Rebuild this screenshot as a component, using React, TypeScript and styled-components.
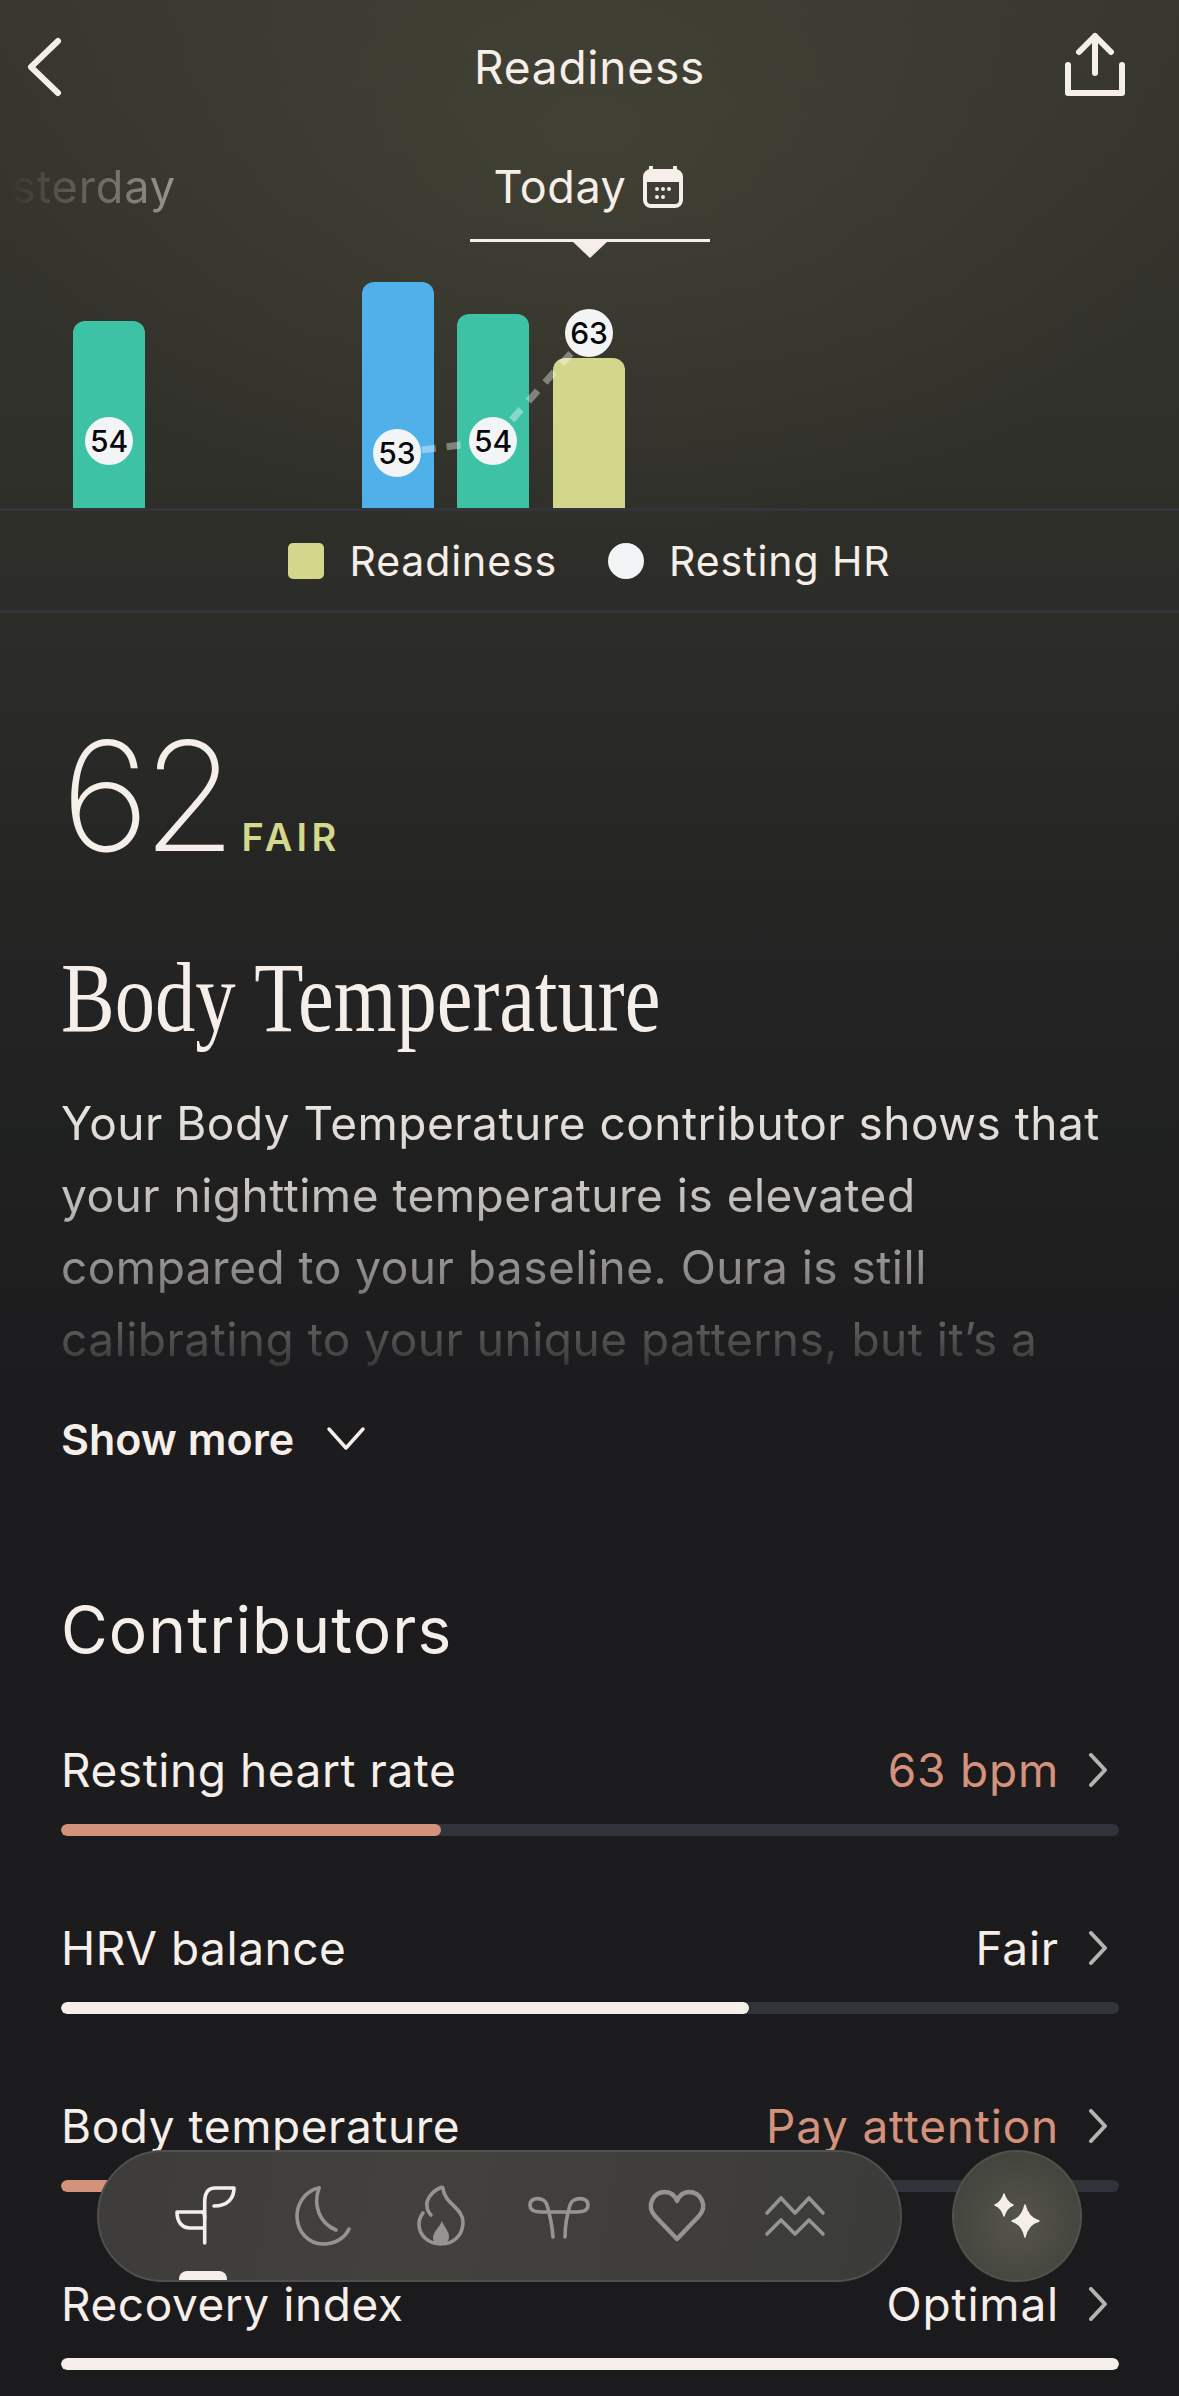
import React from "react";
import styled, { createGlobalStyle } from "styled-components";

const CREAM = "#f6eee8";
const SANS = `"Inter", "Liberation Sans", sans-serif`;

const GlobalStyle = createGlobalStyle`
  html, body {
    margin: 0;
    padding: 0;
    background: #1b1b1d;
  }
  * {
    box-sizing: border-box;
  }
`;

const Page = styled.div`
  position: relative;
  width: 1179px;
  height: 2396px;
  overflow: hidden;
  color: ${CREAM};
  font-family: ${SANS};
  background:
    radial-gradient(ellipse 620px 420px at 590px 130px, rgba(78, 76, 60, 0.5), rgba(78, 76, 60, 0) 100%),
    linear-gradient(180deg, #37372f 0px, #31312b 400px, #2a2b27 700px, #222322 1000px, #1c1c1e 1380px, #1b1b1d 100%);
`;

const Header = styled.header`
  display: grid;
  grid-template-columns: 1fr auto 1fr;
  align-items: center;
  height: 134px;
`;

const HeaderTitle = styled.h1`
  margin: 0;
  font-size: 46px;
  font-weight: 400;
  letter-spacing: 0.8px;
`;

const HeaderIcon = styled.svg<{ $end?: boolean }>`
  display: block;
  justify-self: ${({ $end }) => ($end ? "end" : "start")};
  margin-right: ${({ $end }) => ($end ? "40px" : "0")};
  fill: none;
  stroke: ${CREAM};
  stroke-width: 6;
  stroke-linecap: round;
  stroke-linejoin: round;
`;

const DateStrip = styled.div`
  display: grid;
  grid-template-columns: 470px 240px;
  height: 108px;
`;

const Yesterday = styled.div`
  display: flex;
  justify-content: flex-end;
  align-items: center;
  width: 176px;
  height: 105px;
  overflow: hidden;
  font-size: 45px;
  letter-spacing: 0.9px;
  white-space: nowrap;
  color: #b9b6ae;
  mask-image: linear-gradient(90deg, transparent 6px, rgba(0, 0, 0, 0.75) 176px);
`;

const TodayTab = styled.div`
  position: relative;
  display: flex;
  justify-content: center;
  align-items: center;
  gap: 16px;
  height: 108px;
  padding-right: 2px;
  border-bottom: 3px solid ${CREAM};
  font-size: 45px;
  letter-spacing: 0.6px;

  &::after {
    content: "";
    position: absolute;
    left: 102px;
    bottom: -19px;
    border-left: 18px solid transparent;
    border-right: 18px solid transparent;
    border-top: 17px solid ${CREAM};
  }
`;

const Chart = styled.div`
  position: relative;
  display: flex;
  align-items: flex-end;
  height: 266px;
  padding-left: 73px;
`;

const Bar = styled.div<{ $height: number; $color: string; $gap: number }>`
  width: 72px;
  height: ${({ $height }) => $height}px;
  margin-right: ${({ $gap }) => $gap}px;
  background: ${({ $color }) => $color};
  border-radius: 12px 12px 0 0;
`;

const TrendLine = styled.svg`
  position: absolute;
  left: 0;
  top: 0;
  fill: none;
  stroke: rgba(255, 255, 255, 0.38);
  stroke-width: 7;
  stroke-dasharray: 14 11;
`;

const Badge = styled.div<{ $x: number; $y: number }>`
  position: absolute;
  left: ${({ $x }) => $x - 24}px;
  top: ${({ $y }) => $y - 24}px;
  display: flex;
  align-items: center;
  justify-content: center;
  width: 48px;
  height: 48px;
  border-radius: 50%;
  background: #f3f4f6;
  color: #08080a;
  font-size: 30px;
  font-weight: 500;
`;

const Legend = styled.div`
  display: flex;
  justify-content: center;
  align-items: center;
  height: 105px;
  border-top: 3px solid #32353c;
  border-bottom: 3px solid #32353c;
`;

const LegendSwatch = styled.span<{ $round?: boolean; $color: string }>`
  width: 36px;
  height: 36px;
  margin-right: 25px;
  border-radius: ${({ $round }) => ($round ? "50%" : "5px")};
  background: ${({ $color }) => $color};
`;

const LegendLabel = styled.span`
  margin-right: 51px;
  font-size: 41px;
  letter-spacing: 0.9px;

  &:last-child {
    margin-right: 0;
  }
`;

const Content = styled.main`
  padding: 0 60px 0 61px;
`;

const Score = styled.div`
  display: flex;
  align-items: baseline;
  gap: 12px;
  height: 329px;
  padding-top: 89px;
  line-height: 188px;
`;

const ScoreValue = styled.span`
  font-size: 152px;
  font-weight: 200;
  letter-spacing: -7px;
`;

const ScoreLabel = styled.span`
  font-size: 38px;
  font-weight: 600;
  letter-spacing: 4.3px;
  color: #d3d88c;
`;

const Title = styled.h2`
  margin: 0;
  height: 112px;
  font-family: "Liberation Serif", serif;
  font-size: 100px;
  font-weight: 400;
  line-height: 112px;
  white-space: nowrap;
  transform: scaleX(0.806);
  transform-origin: left center;
`;

const Summary = styled.div`
  margin-top: 33px;
  font-size: 46px;
  line-height: 72px;
  letter-spacing: 0.5px;
  white-space: nowrap;
  color: #f1ebe6;
  mask-image: linear-gradient(180deg, #000 0px, rgba(0, 0, 0, 0.85) 90px, rgba(0, 0, 0, 0.55) 180px, rgba(0, 0, 0, 0.1) 288px);
`;

const SummaryLine = styled.div``;

const ShowMore = styled.button`
  display: flex;
  align-items: center;
  gap: 32px;
  height: 60px;
  margin-top: 34px;
  padding: 0;
  border: 0;
  background: none;
  color: ${CREAM};
  font-family: ${SANS};
  font-size: 43px;
  font-weight: 600;
`;

const ShowMoreIcon = styled.svg`
  fill: none;
  stroke: ${CREAM};
  stroke-width: 3.5;
  stroke-linecap: round;
  stroke-linejoin: round;
`;

const SectionTitle = styled.h3`
  margin: 121px 0 0;
  height: 80px;
  font-size: 64px;
  font-weight: 400;
  line-height: 80px;
  letter-spacing: 1.1px;
`;

const Contributors = styled.section`
  margin-top: 70px;
`;

const Row = styled.div`
  height: 178px;
`;

const RowHead = styled.div`
  display: flex;
  align-items: center;
  height: 60px;
  margin-bottom: 24px;
  font-size: 46px;
`;

const RowLabel = styled.span`
  flex: 1;
  letter-spacing: 0.55px;
`;

const RowValue = styled.span<{ $alert?: boolean }>`
  color: ${({ $alert }) => ($alert ? "#d4917b" : CREAM)};
  letter-spacing: 0.8px;
`;

const RowChevron = styled.svg`
  margin: 0 11px 0 29px;
  fill: none;
  stroke: #b5b3b0;
  stroke-width: 4;
  stroke-linecap: round;
  stroke-linejoin: round;
`;

const Track = styled.div`
  height: 12px;
  border-radius: 6px;
  background: #30333a;
  overflow: hidden;
`;

const Fill = styled.div<{ $alert?: boolean; $percent: number }>`
  height: 100%;
  width: ${({ $percent }) => $percent}%;
  border-radius: 6px;
  background: ${({ $alert }) => ($alert ? "#d4917b" : CREAM)};
`;

const Nav = styled.nav`
  position: absolute;
  left: 97px;
  top: 2150px;
  display: flex;
  align-items: center;
  width: 805px;
  height: 132px;
  padding-left: 47px;
  border: 2px solid #4f4f4d;
  border-radius: 66px;
  overflow: hidden;
  background: linear-gradient(100deg, #3d3c3b, #43413e 40%, #3b3b3a);
`;

const NavIcon = styled.svg<{ $active?: boolean; $heavy?: boolean }>`
  flex: none;
  margin: 0 27px;
  fill: none;
  stroke: ${({ $active }) => ($active ? CREAM : "#969492")};
  stroke-width: ${({ $heavy }) => ($heavy ? 4.4 : 3.6)};
  stroke-linecap: round;
  stroke-linejoin: round;
`;

const NavMarker = styled.div`
  position: absolute;
  left: 80px;
  bottom: 0;
  width: 48px;
  height: 9px;
  border-radius: 8px 8px 0 0;
  background: ${CREAM};
`;

const AssistantButton = styled.div`
  position: absolute;
  left: 952px;
  top: 2150px;
  display: flex;
  align-items: center;
  justify-content: center;
  width: 130px;
  height: 132px;
  border: 2px solid #51524a;
  border-radius: 50%;
  background: radial-gradient(circle at 50% 55%, #55554a, #3d3e39 100%);
`;

const rows = [
  { label: "Resting heart rate", value: "63 bpm", percent: 35.9, alert: true },
  { label: "HRV balance", value: "Fair", percent: 65, alert: false },
  { label: "Body temperature", value: "Pay attention", percent: 12, alert: true },
  { label: "Recovery index", value: "Optimal", percent: 100, alert: false },
];

const Chevron = () => (
  <RowChevron width="20" height="34" viewBox="0 0 20 34">
    <path d="M3 2 L17 17 L3 32" />
  </RowChevron>
);

const App = () => {
  return (
    <Page>
      <GlobalStyle />
      <Header>
        <HeaderIcon width="70" height="70" viewBox="0 32 70 70">
          <path d="M58 41 L31 67 L58 93" />
        </HeaderIcon>
        <HeaderTitle>Readiness</HeaderTitle>
        <HeaderIcon $end width="80" height="80" viewBox="1059 27 80 80">
          <path d="M1095 73 V36 M1079 52 L1095 36 L1111 52 M1068 65 V93 H1122 V65" />
        </HeaderIcon>
      </Header>

      <DateStrip>
        <Yesterday>Yesterday</Yesterday>
        <TodayTab>
          Today
          <svg width="42" height="42" viewBox="0 0 42 42">
            <path d="M9 1 V8 M33 1 V8" stroke={CREAM} strokeWidth="4" strokeLinecap="round" />
            <rect x="3" y="5" width="36" height="35" rx="6" fill="#3f3e35" stroke={CREAM} strokeWidth="4" />
            <path d="M5 5 H37 V16 H5 Z" fill={CREAM} />
            <g fill={CREAM}>
              <circle cx="15" cy="23" r="2" />
              <circle cx="21" cy="23" r="2" />
              <circle cx="27" cy="23" r="2" />
              <circle cx="15" cy="31" r="2" />
              <circle cx="21" cy="31" r="2" />
            </g>
          </svg>
        </TodayTab>
      </DateStrip>

      <Chart>
        <Bar $height={187} $color="#3dc2a6" $gap={217} />
        <Bar $height={226} $color="#50b1ea" $gap={23} />
        <Bar $height={194} $color="#3dc2a6" $gap={24} />
        <Bar $height={150} $color="#d2d78c" $gap={0} />
        <TrendLine width="1179" height="266" viewBox="0 0 1179 266">
          <path d="M397 211 L493 199 L589 91" />
        </TrendLine>
        <Badge $x={109} $y={199}>54</Badge>
        <Badge $x={397} $y={211}>53</Badge>
        <Badge $x={493} $y={199}>54</Badge>
        <Badge $x={589} $y={91}>63</Badge>
      </Chart>

      <Legend>
        <LegendSwatch $color="#d2d78c" />
        <LegendLabel>Readiness</LegendLabel>
        <LegendSwatch $round $color="#f3f4f6" />
        <LegendLabel>Resting HR</LegendLabel>
      </Legend>

      <Content>
        <Score>
          <ScoreValue>62</ScoreValue>
          <ScoreLabel>FAIR</ScoreLabel>
        </Score>
        <Title>Body Temperature</Title>
        <Summary>
          <SummaryLine>Your Body Temperature contributor shows that</SummaryLine>
          <SummaryLine>your nighttime temperature is elevated</SummaryLine>
          <SummaryLine>compared to your baseline. Oura is still</SummaryLine>
          <SummaryLine>calibrating to your unique patterns, but it’s a</SummaryLine>
        </Summary>
        <ShowMore>
          Show more
          <ShowMoreIcon width="40" height="26" viewBox="0 0 40 26">
            <path d="M3 3 L20 22 L37 3" />
          </ShowMoreIcon>
        </ShowMore>
        <SectionTitle>Contributors</SectionTitle>
        <Contributors>
          {rows.map((row) => (
            <Row key={row.label}>
              <RowHead>
                <RowLabel>{row.label}</RowLabel>
                <RowValue $alert={row.alert}>{row.value}</RowValue>
                <Chevron />
              </RowHead>
              <Track>
                <Fill $alert={row.alert} $percent={row.percent} />
              </Track>
            </Row>
          ))}
        </Contributors>
      </Content>

      <Nav>
        <NavIcon $active width="64" height="64" viewBox="21 24 64 64">
          <path d="M52.7 83 V42 C52.7 33 56 28 63 28 H82 C82 38 76 46 62 46" />
          <path d="M51 52 H25 C25 62 30 68 38 68 H52" />
          <path d="M51 52 C52 53 52.7 55 52.7 58" />
        </NavIcon>
        <NavIcon width="64" height="64" viewBox="140 24 64 64">
          <path d="M168 28 C153 31 146 45 146 56 C146 72 158 84 172 84 C184 84 194 78 198 69" />
          <path d="M168 28 C162 45 168 63 185 70" />
        </NavIcon>
        <NavIcon width="64" height="64" viewBox="258 24 64 64">
          <path d="M272 53 C269 57 268 61 268 64 C268 76 278 84 290 84 C302 84 312 76 312 62 C312 48 294 44 292 29 C292 27 290 27 289 28 C280 32 275 40 276 46 C276 50 278 53 280 55" />
          <path d="M291 61 C288 68 282 72 282 78 C282 82 286 84 290 84 C295 84 298 81 298 77 C298 71 293 67 291 61 Z" fill="#969492" stroke="none" />
        </NavIcon>
        <NavIcon width="64" height="64" viewBox="27 24 64 64">
          <path d="M53 77 C52 65 50 55 47 45 C45 37 30 36 30 45 C30 52 38 52 44 52 H74 C80 52 88 52 88 45 C88 36 72 37 70 45 C67 55 65 65 65 77" />
        </NavIcon>
        <NavIcon $heavy width="64" height="64" viewBox="145 24 64 64">
          <path d="M177 79 L155 56 C146 46 153 32 165 32 C171 32 175 36 177 41 C179 36 183 32 189 32 C201 32 208 46 199 56 Z" />
        </NavIcon>
        <NavIcon width="64" height="64" viewBox="264 24 64 64">
          <path d="M268 53 L282 38 L296 53 L310 38 L324 53" />
          <path d="M268 74 L282 60 L296 74 L310 60 L324 74" />
        </NavIcon>
        <NavMarker />
      </Nav>

      <AssistantButton>
        <svg width="64" height="64" viewBox="0 0 64 64" fill={CREAM} stroke={CREAM} strokeWidth="1.4" strokeLinejoin="round">
          <path d="M19 10 Q21.5 18.5 28 21 Q21.5 23.5 19 32 Q16.5 23.5 10 21 Q16.5 18.5 19 10 Z" />
          <path d="M40 21 Q43 34 54 37 Q43 40 40 53 Q37 40 27 37 Q37 34 40 21 Z" />
        </svg>
      </AssistantButton>
    </Page>
  );
};

export default App;
